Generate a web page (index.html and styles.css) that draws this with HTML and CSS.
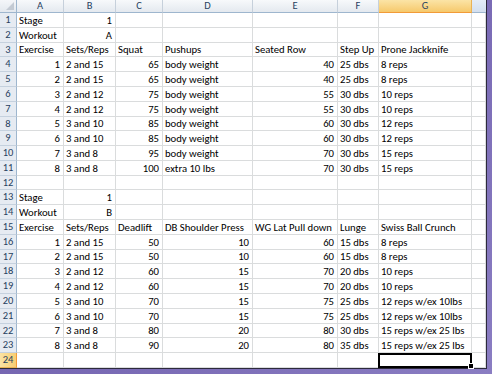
FILE: index.html
```html
<!DOCTYPE html>
<html>
<head>
<meta charset="utf-8">
<link rel="stylesheet" href="styles.css">
</head>
<body>
<div class="frame">
<div class="sheet">
  <div class="corner"></div>
  <div class="ch">A</div><div class="ch">B</div><div class="ch">C</div><div class="ch">D</div><div class="ch">E</div><div class="ch">F</div><div class="ch sel">G</div><div class="ch blue"></div>

  <div class="rh">1</div><div class="c">Stage</div><div class="c n">1</div><div class="c"></div><div class="c"></div><div class="c"></div><div class="c"></div><div class="c"></div><div class="c"></div>
  <div class="rh">2</div><div class="c">Workout</div><div class="c n">A</div><div class="c"></div><div class="c"></div><div class="c"></div><div class="c"></div><div class="c"></div><div class="c"></div>
  <div class="rh">3</div><div class="c">Exercise</div><div class="c">Sets/Reps</div><div class="c">Squat</div><div class="c">Pushups</div><div class="c">Seated Row</div><div class="c">Step Up</div><div class="c">Prone Jackknife</div><div class="c"></div>
  <div class="rh">4</div><div class="c n">1</div><div class="c">2 and 15</div><div class="c n">65</div><div class="c">body weight</div><div class="c n">40</div><div class="c">25 dbs</div><div class="c">8 reps</div><div class="c"></div>
  <div class="rh">5</div><div class="c n">2</div><div class="c">2 and 15</div><div class="c n">65</div><div class="c">body weight</div><div class="c n">40</div><div class="c">25 dbs</div><div class="c">8 reps</div><div class="c"></div>
  <div class="rh">6</div><div class="c n">3</div><div class="c">2 and 12</div><div class="c n">75</div><div class="c">body weight</div><div class="c n">55</div><div class="c">30 dbs</div><div class="c">10 reps</div><div class="c"></div>
  <div class="rh">7</div><div class="c n">4</div><div class="c">2 and 12</div><div class="c n">75</div><div class="c">body weight</div><div class="c n">55</div><div class="c">30 dbs</div><div class="c">10 reps</div><div class="c"></div>
  <div class="rh">8</div><div class="c n">5</div><div class="c">3 and 10</div><div class="c n">85</div><div class="c">body weight</div><div class="c n">60</div><div class="c">30 dbs</div><div class="c">12 reps</div><div class="c"></div>
  <div class="rh">9</div><div class="c n">6</div><div class="c">3 and 10</div><div class="c n">85</div><div class="c">body weight</div><div class="c n">60</div><div class="c">30 dbs</div><div class="c">12 reps</div><div class="c"></div>
  <div class="rh">10</div><div class="c n">7</div><div class="c">3 and 8</div><div class="c n">95</div><div class="c">body weight</div><div class="c n">70</div><div class="c">30 dbs</div><div class="c">15 reps</div><div class="c"></div>
  <div class="rh">11</div><div class="c n">8</div><div class="c">3 and 8</div><div class="c n">100</div><div class="c">extra 10 lbs</div><div class="c n">70</div><div class="c">30 dbs</div><div class="c">15 reps</div><div class="c"></div>
  <div class="rh">12</div><div class="c"></div><div class="c"></div><div class="c"></div><div class="c"></div><div class="c"></div><div class="c"></div><div class="c"></div><div class="c"></div>
  <div class="rh">13</div><div class="c">Stage</div><div class="c n">1</div><div class="c"></div><div class="c"></div><div class="c"></div><div class="c"></div><div class="c"></div><div class="c"></div>
  <div class="rh">14</div><div class="c">Workout</div><div class="c n">B</div><div class="c"></div><div class="c"></div><div class="c"></div><div class="c"></div><div class="c"></div><div class="c"></div>
  <div class="rh">15</div><div class="c">Exercise</div><div class="c">Sets/Reps</div><div class="c">Deadlift</div><div class="c">DB Shoulder Press</div><div class="c">WG Lat Pull down</div><div class="c">Lunge</div><div class="c">Swiss Ball Crunch</div><div class="c"></div>
  <div class="rh">16</div><div class="c n">1</div><div class="c">2 and 15</div><div class="c n">50</div><div class="c n">10</div><div class="c n">60</div><div class="c">15 dbs</div><div class="c">8 reps</div><div class="c"></div>
  <div class="rh">17</div><div class="c n">2</div><div class="c">2 and 15</div><div class="c n">50</div><div class="c n">10</div><div class="c n">60</div><div class="c">15 dbs</div><div class="c">8 reps</div><div class="c"></div>
  <div class="rh">18</div><div class="c n">3</div><div class="c">2 and 12</div><div class="c n">60</div><div class="c n">15</div><div class="c n">70</div><div class="c">20 dbs</div><div class="c">10 reps</div><div class="c"></div>
  <div class="rh">19</div><div class="c n">4</div><div class="c">2 and 12</div><div class="c n">60</div><div class="c n">15</div><div class="c n">70</div><div class="c">20 dbs</div><div class="c">10 reps</div><div class="c"></div>
  <div class="rh">20</div><div class="c n">5</div><div class="c">3 and 10</div><div class="c n">70</div><div class="c n">15</div><div class="c n">75</div><div class="c">25 dbs</div><div class="c">12 reps w/ex 10lbs</div><div class="c"></div>
  <div class="rh">21</div><div class="c n">6</div><div class="c">3 and 10</div><div class="c n">70</div><div class="c n">15</div><div class="c n">75</div><div class="c">25 dbs</div><div class="c">12 reps w/ex 10lbs</div><div class="c"></div>
  <div class="rh">22</div><div class="c n">7</div><div class="c">3 and 8</div><div class="c n">80</div><div class="c n">20</div><div class="c n">80</div><div class="c">30 dbs</div><div class="c">15 reps w/ex 25 lbs</div><div class="c"></div>
  <div class="rh">23</div><div class="c n">8</div><div class="c">3 and 8</div><div class="c n">90</div><div class="c n">20</div><div class="c n">80</div><div class="c">35 dbs</div><div class="c">15 reps w/ex 25 lbs</div><div class="c"></div>
  <div class="rh sel">24</div><div class="c"></div><div class="c"></div><div class="c"></div><div class="c"></div><div class="c"></div><div class="c"></div><div class="c active"></div><div class="c"></div>
</div>
</div>
</body>
</html>
```

FILE: styles.css
```css
html, body {
  margin: 0;
  padding: 0;
  background: #ffffff;
}

.frame {
  width: 492px;
  height: 374px;
  background: linear-gradient(135deg, #6a5aa6 0%, #7b6cb6 60%, #8a7dc2 100%);
  overflow: hidden;
}

.sheet {
  display: grid;
  grid-template-columns: 17px 47px 52px 47px 90px 85px 41px 93px 14px;
  grid-template-rows: 13px 15px 15px 14px 15px 15px 15px 15px 14px 15px 15px 15px 14px 15px 15px 15px 15px 14px 15px 15px 15px 15px 14px 15px 15px;
  width: 486px;
  height: 368px;
  background: #ffffff;
  border-right: 1px solid #2d2a3c;
  border-bottom: 1px solid #2d2a3c;
  font-family: Carlito, Lato, "Liberation Sans", sans-serif;
  font-size: 10.7px;
  color: #000000;
}

.sheet > div {
  box-sizing: border-box;
  min-width: 0;
}

.corner {
  position: relative;
  background: linear-gradient(#f4f6f9, #e3e8ee);
  border-right: 1px solid #9eb6ce;
  border-bottom: 1px solid #9eb6ce;
}

.corner::after {
  content: "";
  position: absolute;
  right: 2px;
  bottom: 2px;
  width: 0;
  height: 0;
  border-left: 8px solid transparent;
  border-bottom: 8px solid #c3cad3;
}

.ch {
  display: flex;
  align-items: center;
  justify-content: center;
  background: linear-gradient(#f7f9fb, #e4e9ef);
  border-right: 1px solid #c6d0db;
  border-bottom: 1px solid #9eb6ce;
  color: #27415f;
  font-size: 10.5px;
  line-height: 12px;
}

.ch.sel {
  background: linear-gradient(#fbe4a6, #f6c96c);
  border-right: 1px solid #e9b256;
  border-bottom: 1px solid #f29b38;
}

.ch.blue {
  background: linear-gradient(#e4ecf7, #d3dfef);
  border-right: none;
}

.rh {
  display: flex;
  align-items: center;
  justify-content: center;
  background: #e6ebf2;
  border-right: 1px solid #9eb6ce;
  border-bottom: 1px solid #c5d1de;
  color: #27415f;
  font-size: 10.5px;
  line-height: 12px;
}

.rh.sel {
  background: linear-gradient(90deg, #fbe3a3, #f7cd73);
  border-right: 1px solid #f29b38;
  border-bottom: 1px solid #e9b256;
}

.c {
  display: flex;
  align-items: flex-end;
  padding: 0 2px 0 2px;
  border-right: 1px solid #dadcdd;
  border-bottom: 1px solid #dadcdd;
  line-height: 12px;
  white-space: nowrap;
  overflow: hidden;
}

.c.n {
  justify-content: flex-end;
  padding-right: 3px;
}

.c.active {
  position: relative;
  overflow: visible;
}

.c.active::before {
  content: "";
  position: absolute;
  left: -1px;
  top: 0;
  right: -1px;
  bottom: -1px;
  border: 2px solid #000000;
}

.c.active::after {
  content: "";
  position: absolute;
  right: -3px;
  bottom: -2px;
  width: 4px;
  height: 4px;
  background: #000000;
  border: 1px solid #ffffff;
}
```
